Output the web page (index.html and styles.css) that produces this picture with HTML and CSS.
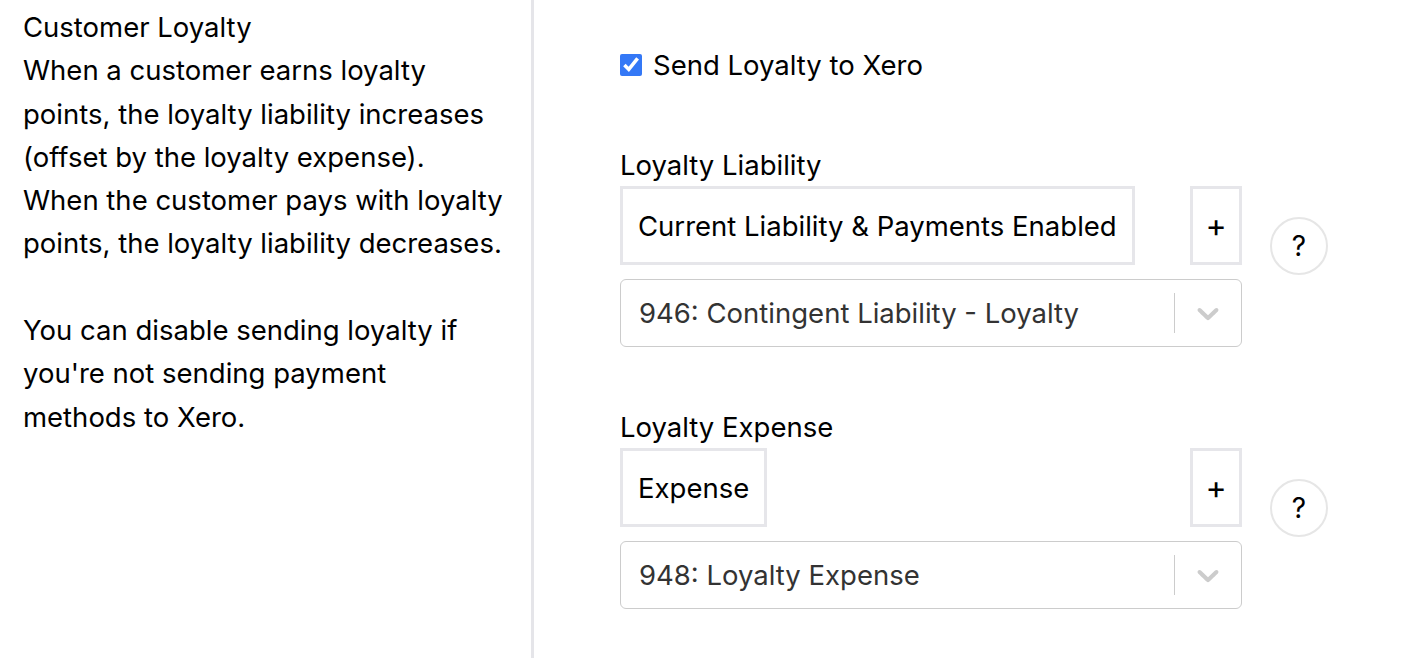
FILE: index.html
```html
<!DOCTYPE html>
<html lang="en">
<head>
  <meta charset="UTF-8">
  <title>Customer Loyalty</title>
  <link rel="stylesheet" href="styles.css">
</head>
<body>
  <div class="page">
    <aside class="info">
      <p>Customer Loyalty<br>When a customer earns loyalty points, the loyalty liability increases (offset by the loyalty expense).<br>When the customer pays with loyalty points, the loyalty liability decreases.<br><br>You can disable sending loyalty if you're not sending payment methods to Xero.</p>
    </aside>

    <main class="settings">
      <label class="toggle">
        <input type="checkbox" checked>
        <span>Send Loyalty to Xero</span>
      </label>

      <div class="account">
        <div class="account-label">Loyalty Liability</div>
        <div class="account-body">
          <div class="account-fields">
            <div class="type-row">
              <span class="type-tag">Current Liability &amp; Payments Enabled</span>
              <button class="add-btn">+</button>
            </div>
            <div class="select">
              <span class="select-value">946: Contingent Liability - Loyalty</span>
              <span class="select-sep"></span>
              <span class="select-arrow">
                <svg viewBox="0 0 20 20" width="36" height="36"><path d="M4.516 7.548c0.436-0.446 1.043-0.481 1.576 0l3.908 3.747 3.908-3.747c0.533-0.481 1.141-0.446 1.574 0 0.436 0.445 0.408 1.197 0 1.615-0.406 0.418-4.695 4.502-4.695 4.502-0.217 0.223-0.502 0.335-0.787 0.335s-0.57-0.112-0.789-0.335c0 0-4.287-4.084-4.695-4.502s-0.436-1.170 0-1.615z"/></svg>
              </span>
            </div>
          </div>
          <button class="help-btn">?</button>
        </div>
      </div>

      <div class="account">
        <div class="account-label">Loyalty Expense</div>
        <div class="account-body">
          <div class="account-fields">
            <div class="type-row">
              <span class="type-tag">Expense</span>
              <button class="add-btn">+</button>
            </div>
            <div class="select">
              <span class="select-value">948: Loyalty Expense</span>
              <span class="select-sep"></span>
              <span class="select-arrow">
                <svg viewBox="0 0 20 20" width="36" height="36"><path d="M4.516 7.548c0.436-0.446 1.043-0.481 1.576 0l3.908 3.747 3.908-3.747c0.533-0.481 1.141-0.446 1.574 0 0.436 0.445 0.408 1.197 0 1.615-0.406 0.418-4.695 4.502-4.695 4.502-0.217 0.223-0.502 0.335-0.787 0.335s-0.57-0.112-0.789-0.335c0 0-4.287-4.084-4.695-4.502s-0.436-1.170 0-1.615z"/></svg>
              </span>
            </div>
          </div>
          <button class="help-btn">?</button>
        </div>
      </div>
    </main>
  </div>
</body>
</html>
```

FILE: styles.css
```css
body {
  margin: 0;
  font-family: Inter, "Liberation Sans", Arial, sans-serif;
  font-size: 27.5px;
  color: #000;
  background: #fff;
}

.page {
  display: flex;
  min-height: 100vh;
}

.info {
  width: 480px;
  padding: 6px 28px 0 23px;
  border-right: 3px solid #e5e5e9;
  flex-shrink: 0;
}

.info p {
  margin: 0;
  line-height: 43.3px;
}

.settings {
  display: flex;
  flex-direction: column;
  gap: 58px;
  padding: 43px 0 0 86px;
}

.toggle {
  display: flex;
  align-items: center;
  gap: 11px;
  height: 43px;
}

.toggle input {
  width: 22px;
  height: 22px;
  margin: 0;
  accent-color: #3478f6;
}

.account + .account {
  margin-top: 1px;
}

.account-label {
  line-height: 42px;
}

.account-body {
  display: flex;
  align-items: flex-start;
  gap: 28px;
}

.account-fields {
  width: 622px;
  display: flex;
  flex-direction: column;
  gap: 14px;
}

.type-row {
  display: flex;
  justify-content: space-between;
  height: 79px;
}

.type-tag {
  display: flex;
  align-items: center;
  padding: 0 15px;
  border: 3px solid #e6e6ea;
}

.add-btn {
  width: 52px;
  border: 3px solid #e6e6ea;
  background: #fff;
  font-family: inherit;
  font-size: 32px;
  color: #000;
  padding: 0;
}

.select {
  display: flex;
  align-items: center;
  height: 68px;
  box-sizing: border-box;
  border: 1px solid #ccc;
  border-radius: 6px;
  color: #333;
}

.select-value {
  flex: 1;
  padding-left: 18px;
}

.select-sep {
  width: 1px;
  height: 40px;
  background: #ccc;
}

.select-arrow {
  display: flex;
  padding: 0 15px;
}

.select-arrow svg {
  fill: #ccc;
}

.help-btn {
  width: 58px;
  height: 58px;
  margin-top: 31px;
  border: 2px solid #e6e6e6;
  border-radius: 50%;
  background: #fff;
  font-family: inherit;
  font-size: 28px;
  color: #000;
  padding: 0;
}
```
